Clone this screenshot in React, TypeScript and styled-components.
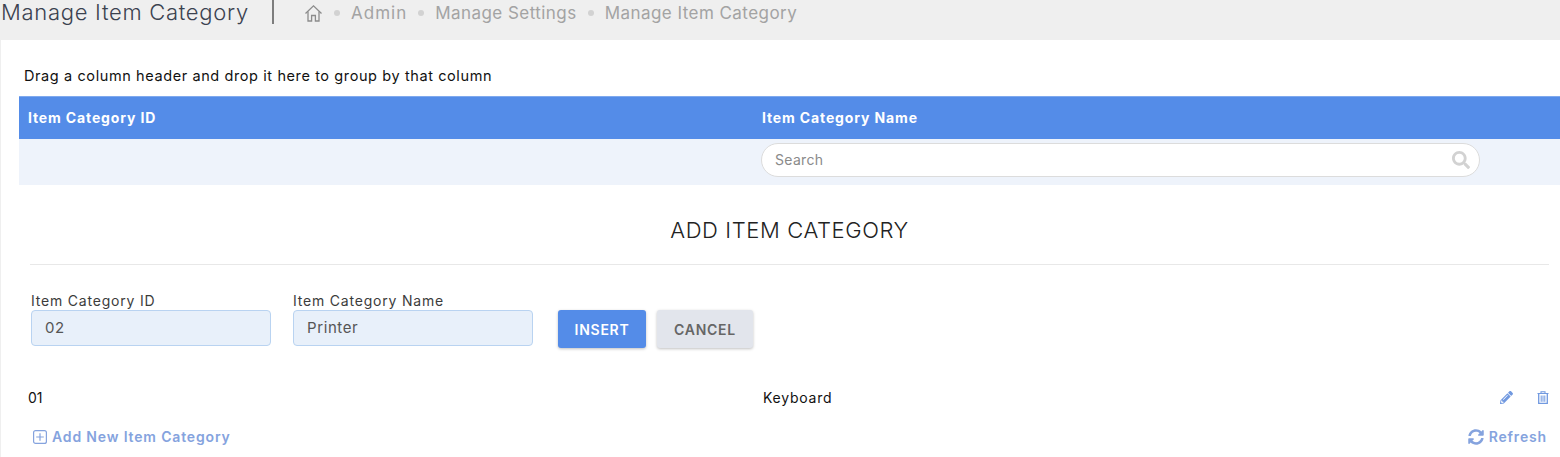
import { createGlobalStyle } from "styled-components";
import styled from "styled-components";
import { FaPencilAlt, FaSearch, FaSyncAlt } from "react-icons/fa";

const GlobalStyle = createGlobalStyle`
  html, body {
    margin: 0;
    padding: 0;
    background: #fff;
    overflow: hidden;
  }
  * {
    box-sizing: border-box;
  }
  body {
    font-family: "Inter", "Open Sans", sans-serif;
  }
`;

const Page = styled.div`
  width: 1560px;
  height: 457px;
  overflow: hidden;
  border-left: 1px solid #efefef;
  background: #fff;
`;

const TopBar = styled.header`
  height: 40px;
  margin-left: -1px;
  padding-left: 1px;
  background: #efefef;
  display: flex;
  align-items: flex-start;
`;

const PageTitle = styled.h1`
  margin: 0;
  width: 271px;
  height: 25px;
  font-size: 22px;
  line-height: 25px;
  font-weight: 300;
  letter-spacing: 0.7px;
  color: #3b4250;
  white-space: nowrap;
`;

const Divider = styled.span`
  width: 2px;
  height: 24px;
  background: #7d7d7d;
`;

const Crumbs = styled.nav`
  margin-left: 30px;
  height: 26px;
  display: flex;
  align-items: center;
  color: #a3a3a3;
  font-size: 17px;
  font-weight: 400;
`;

const Crumb = styled.span<{ $spacing?: number }>`
  white-space: nowrap;
  letter-spacing: ${(p) => p.$spacing ?? 0.45}px;
`;

const Dot = styled.span`
  width: 6px;
  height: 6px;
  margin: 0 11px;
  border-radius: 50%;
  background: #d2d2d2;
`;

const Content = styled.main`
  padding-left: 18px;
`;

const GroupHint = styled.div`
  height: 56px;
  padding: 27px 0 0 5px;
  font-size: 14.5px;
  line-height: 18px;
  color: #111;
  letter-spacing: 0.6px;
`;

const GridRow = styled.div`
  display: grid;
  grid-template-columns: 733px 1fr;
`;

const HeaderRow = styled(GridRow)`
  height: 43px;
  padding-bottom: 2px;
  background: #548ce8;
  border-top: 1px solid #7fa9ee;
  align-items: center;
`;

const HeaderCell = styled.div`
  padding-left: 9px;
  color: #fff;
  font-size: 14px;
  font-weight: 700;
  letter-spacing: 0.86px;
  &:nth-child(2) {
    padding-left: 10px;
  }
`;

const FilterRow = styled(GridRow)`
  height: 46px;
  padding-top: 4px;
  background: #eef3fb;
`;

const SearchBox = styled.div`
  grid-column: 2;
  margin-left: 9px;
  width: 719px;
  height: 34px;
  padding: 0 9px 2px 13px;
  display: flex;
  align-items: center;
  justify-content: space-between;
  background: #fff;
  border: 1px solid #dcdcdc;
  border-radius: 17px;
  color: #8a8a8a;
  font-size: 14px;
  letter-spacing: 0.3px;
  svg {
    color: #d2d2d2;
    margin-top: 2px;
  }
`;

const FormPanel = styled.section`
  padding: 0 11px 0 11px;
`;

const FormTitle = styled.h2`
  margin: 0;
  height: 80px;
  padding-top: 30px;
  border-bottom: 1px solid #e8e8e8;
  text-align: center;
  font-size: 22px;
  line-height: 30px;
  font-weight: 300;
  letter-spacing: 0.6px;
  color: #222;
`;

const FormRow = styled.div`
  margin-top: 27px;
  display: flex;
  align-items: flex-start;
  gap: 22px;
  padding-left: 1px;
`;

const Field = styled.label`
  width: 240px;
  display: flex;
  flex-direction: column;
  font-size: 14px;
  line-height: 18px;
  letter-spacing: 0.8px;
  color: #3c3c3c;
`;

const TextInput = styled.div`
  height: 36px;
  padding-left: 13px;
  display: flex;
  align-items: center;
  background: #e8f0fa;
  border: 1px solid #b9d3f1;
  border-radius: 4px;
  font-size: 15px;
  letter-spacing: 0.6px;
  color: #555;
`;

const Buttons = styled.div`
  margin: 18px 0 0 3px;
  display: flex;
  gap: 11px;
`;

const Button = styled.button<{ $primary?: boolean }>`
  width: ${(p) => (p.$primary ? "88px" : "96px")};
  height: 38px;
  padding: 0;
  border: none;
  border-radius: 3px;
  background: ${(p) => (p.$primary ? "#548ce8" : "#e2e5ec")};
  color: ${(p) => (p.$primary ? "#fff" : "#666")};
  box-shadow: 0 1px 3px rgba(0, 0, 0, 0.25);
  font-family: inherit;
  font-size: 14px;
  font-weight: 600;
  letter-spacing: 0.75px;
`;

const DataRow = styled(GridRow)`
  margin-top: 39px;
  height: 20px;
  align-items: center;
  font-size: 14px;
  color: #111;
`;

const DataCell = styled.div`
  padding-left: 9px;
  &:nth-child(2) {
    padding-left: 11px;
    letter-spacing: 0.75px;
  }
`;

const RowActions = styled.div`
  display: flex;
  align-items: center;
  justify-content: space-between;
  height: 100%;
`;

const ActionIcons = styled.div`
  display: flex;
  align-items: center;
  gap: 24px;
  padding-right: 11px;
  color: #7199e0;
`;

const Footer = styled.footer`
  margin-top: 21px;
  padding: 0 13px 0 14px;
  display: flex;
  align-items: center;
  justify-content: space-between;
  color: #85a3de;
  font-size: 14px;
  font-weight: 600;
  letter-spacing: 0.84px;
`;

const FooterLink = styled.span`
  display: flex;
  align-items: center;
  gap: 5px;
`;

const App = () => (
  <Page>
    <GlobalStyle />
    <TopBar>
      <PageTitle>Manage Item Category</PageTitle>
      <Divider />
      <Crumbs>
        <svg width="19" height="19" viewBox="0 0 19 19" fill="none" stroke="#8c8c8c" strokeWidth="1.3">
          <path d="M1.5 9.5 9.5 1.8l8 7.7" />
          <path d="M4 7.5V17h3.6v-5.5h3.8V17H15V7.5" />
        </svg>
        <Dot />
        <Crumb $spacing={1}>Admin</Crumb>
        <Dot />
        <Crumb>Manage Settings</Crumb>
        <Dot />
        <Crumb>Manage Item Category</Crumb>
      </Crumbs>
    </TopBar>
    <Content>
      <GroupHint>Drag a column header and drop it here to group by that column</GroupHint>
      <HeaderRow>
        <HeaderCell>Item Category ID</HeaderCell>
        <HeaderCell>Item Category Name</HeaderCell>
      </HeaderRow>
      <FilterRow>
        <SearchBox>
          Search
          <FaSearch size={18} />
        </SearchBox>
      </FilterRow>
      <FormPanel>
        <FormTitle>ADD ITEM CATEGORY</FormTitle>
        <FormRow>
          <Field>
            Item Category ID
            <TextInput>02</TextInput>
          </Field>
          <Field>
            Item Category Name
            <TextInput>Printer</TextInput>
          </Field>
          <Buttons>
            <Button $primary>INSERT</Button>
            <Button>CANCEL</Button>
          </Buttons>
        </FormRow>
      </FormPanel>
      <DataRow>
        <DataCell>01</DataCell>
        <DataCell>
          <RowActions>
            Keyboard
            <ActionIcons>
              <FaPencilAlt size={13} />
              <svg width="12" height="13" viewBox="0 0 12 13" fill="none" stroke="currentColor">
                <path d="M0.5 2.5h11M4 2.5V0.7h4v1.8" strokeWidth="1.1" />
                <path d="M1.7 3v9.4h8.6V3" strokeWidth="1.3" />
                <path d="M4.2 4.5v6.3M6 4.5v6.3M7.8 4.5v6.3" strokeWidth="1" />
              </svg>
            </ActionIcons>
          </RowActions>
        </DataCell>
      </DataRow>
      <Footer>
        <FooterLink>
          <svg width="14" height="14" viewBox="0 0 14 14" fill="none" stroke="#85a3de" strokeWidth="1.2">
            <rect x="0.6" y="0.6" width="12.8" height="12.8" rx="2" />
            <path d="M7 3.2v7.6M3.2 7h7.6" />
          </svg>
          Add New Item Category
        </FooterLink>
        <FooterLink>
          <FaSyncAlt size={16} />
          Refresh
        </FooterLink>
      </Footer>
    </Content>
  </Page>
);

export default App;
